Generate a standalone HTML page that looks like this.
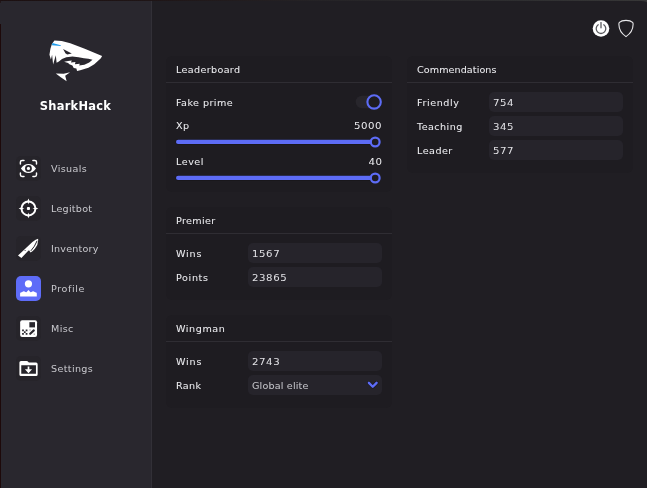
<!DOCTYPE html>
<html lang="en">
<head>
<meta charset="utf-8">
<title>SharkHack</title>
<style>
*{box-sizing:border-box;margin:0;padding:0}
html,body{width:647px;height:488px;overflow:hidden;background:#201e23}
body{position:relative;will-change:transform;font-family:"DejaVu Sans","Liberation Sans",sans-serif;font-size:9.1px;color:#ededf1;letter-spacing:.33px;-webkit-text-stroke:.05px currentColor}
.abs{position:absolute}
#edge-t{left:0;top:0;width:647px;height:1px;background:linear-gradient(90deg,#1c1011 0,#1f1516 150px,#252326 320px,#2e2e30 520px,#373737 100%)}
#edge-l{left:0;top:24px;width:1px;height:464px;background:#1d090a}
#side{left:0;top:0;width:151px;height:488px;background:#29272e}
#side-b{left:151px;top:0;width:1px;height:488px;background:#323037}
#brand{left:0;top:97.600px;width:151px;text-align:center;font-weight:bold;font-size:11.4px;color:#fff;letter-spacing:.25px;line-height:16px;transform:scaleX(1.005);-webkit-text-stroke:0}
.nav{left:16px;width:25px;height:25px;border-radius:5px;background:#26242a}
.nav.on{background:#5e6cf8}
.nav svg{position:absolute;left:0;top:0;width:25px;height:25px}
.nl{left:51px;height:25px;line-height:27px;color:#c9c9ce;-webkit-text-stroke:0;white-space:nowrap;transform:scaleX(1.055);transform-origin:0 50%}
.panel{background:#1e1c21;border-radius:6px}
.panel .hd{position:absolute;left:0;top:0;right:0;height:27px;border-bottom:1px solid #2f2d33}
.t{position:absolute;white-space:nowrap;height:20px;line-height:20px;transform:scaleX(1.055);transform-origin:0 50%}
.t.r{transform-origin:100% 50%;transform:scaleX(1.12);letter-spacing:.45px;-webkit-text-stroke:0}
.in span{display:inline-block;transform:scaleX(1.12);transform-origin:0 50%;-webkit-text-stroke:0}
.in span.tx{transform:scaleX(1.055);-webkit-text-stroke:.05px currentColor}
.in{position:absolute;height:20px;background:#26242b;border-radius:5px;line-height:22px;overflow:hidden;letter-spacing:.52px;padding-left:4.2px;white-space:nowrap;color:#e2e2e6}
</style>
</head>
<body>
<div id="side" class="abs"></div>
<div id="side-b" class="abs"></div>
<div id="edge-t" class="abs"></div>
<div id="edge-l" class="abs"></div>
<div class="abs" style="left:0;top:0;width:1px;height:3px;background:linear-gradient(#1d0f10,#241a1d)"></div>
<svg class="abs" style="left:641px;top:0" width="6" height="4" viewBox="0 0 6 4"><path d="M0 0H6V2.6Q5.4 1.1 0 1Z" fill="#383838"/></svg>

<!-- logo -->
<svg class="abs" style="left:40px;top:32px" width="72" height="58" viewBox="40 32 72 58">
  <path fill="#fff" d="M54.400 40.400L61.700 40.900L70.300 43.200L84.750 48.850L102.100 55.900C101.200 57.800 100.400 58.600 99.500 59.500L94.300 64.300Q91.500 66.300 88.400 67.650L81.100 69.900L77.050 71L76.400 68.600L73.700 68L72.400 65.500L69.400 64.300L68.100 63.050L64.100 61.800L68.100 60.900L71.800 60.500L70.900 62.400L75.500 61.900L74.900 64.200L79.800 63.700L79.200 65.500L84.400 64.700L89.200 62.500L92.500 59.750L88.400 58.800L84 58.200L78.600 57.200L72.400 56.600L66.300 57.200L62 59.050L58.900 61.500L56.600 62.800L55.800 55.200L53.100 64.500L52.100 54.700L50.900 59.400L49.450 54.700L50.400 48.800L51.900 43.900Z"/>
  <path fill="#29272e" d="M63.100 48.900L71.800 53.500L67.200 54.600L65.400 53.200Z"/>
  <path fill="#1e9cec" d="M52.400 43L60.750 45.300L60.750 45.950L51.900 45.350Z"/>
  <path fill="#fff" d="M55.800 73.400L63.700 73.850L70.100 72.200L65.200 75.800L66.650 81.200L60.750 77.300Z"/>
</svg>
<div id="brand" class="abs">SharkHack</div>

<!-- nav -->
<div class="abs nav" style="top:156px"><svg viewBox="0 0 25 25"><g fill="none" stroke="#fff" stroke-width="1.45" stroke-linecap="round" stroke-linejoin="round"><path d="M4.400 8V6.100a1.700 1.700 0 0 1 1.700-1.700H8M16.900 4.400h1.900a1.700 1.700 0 0 1 1.700 1.700V8M20.500 16.900v1.900a1.700 1.700 0 0 1-1.700 1.700h-1.900M8 20.500H6.100a1.700 1.700 0 0 1-1.700-1.700v-1.900"/></g><path fill="#fff" fill-rule="evenodd" d="M4.900 12.450C7 9.300 9.600 7.950 12.450 7.950S17.900 9.300 20 12.450C17.900 15.600 15.300 16.950 12.450 16.950S7 15.600 4.900 12.450zM12.450 9.050a3.400 3.400 0 1 0 0 6.800a3.400 3.400 0 0 0 0-6.800z"/><circle cx="12.450" cy="12.450" r="1.600" fill="#fff"/></svg></div>
<div class="abs nl" style="top:156px">Visuals</div>

<div class="abs nav" style="top:196px"><svg viewBox="0 0 25 25"><circle cx="12.45" cy="12.45" r="6.95" fill="none" stroke="#fff" stroke-width="1.95"/><rect x="10.900" y="10.900" width="3.100" height="3.100" rx="1" fill="#fff"/><path fill="#fff" d="M12.450 2.600l1 2.500-1 3.300-1-3.300zM12.450 22.300l1-2.500-1-3.300-1 3.300zM2.600 12.450l2.500-1 3.300 1-3.300 1zM22.300 12.450l-2.500-1-3.300 1 3.300 1z"/></svg></div>
<div class="abs nl" style="top:196px;letter-spacing:.24px">Legitbot</div>

<div class="abs nav" style="top:236px"><svg viewBox="0 0 25 25"><path fill="#fff" d="M8.400 13.400L16.400 6Q20 3.200 22.100 2.800Q22.700 8 18.900 12.800Q16.800 15.400 14.600 16.500L13 14.300L11.800 15.200L5.400 22L2 19.500Z"/><path d="M14.9 14.8Q18.8 10.6 21.1 4.8" fill="none" stroke="#26242a" stroke-width="1"/><circle cx="9.100" cy="14.500" r=".55" fill="#252329"/></svg></div>
<div class="abs nl" style="top:236px;letter-spacing:.18px">Inventory</div>

<div class="abs nav on" style="top:276px"><svg viewBox="0 0 25 25"><circle cx="12.450" cy="7.800" r="3.600" fill="#fff"/><path fill="#fff" d="M4.1 20.6V17.6Q4.1 16.7 4.9 16.5L6.2 16.1Q7.8 14.2 9.4 16.1L10.4 16.3L12.45 13.9L14.5 16.3L15.5 16.1Q17.1 14.2 18.7 16.1L20 16.5Q20.8 16.7 20.8 17.6V20.6Z"/></svg></div>
<div class="abs nl" style="top:276px;letter-spacing:.55px">Profile</div>

<div class="abs nav" style="top:316px"><svg viewBox="0 0 25 25"><rect x="4.150" y="4.150" width="16.900" height="16.900" rx="2" fill="#fff"/><rect x="13.35" y="6.15" width="5.65" height="5.25" fill="#2a282f"/><g fill="#2a282f"><rect x="6.100" y="13.500" width="1.750" height="1.750"/><rect x="9.700" y="13.500" width="1.750" height="1.750"/><rect x="7.900" y="15.250" width="1.750" height="1.750"/><rect x="6.100" y="17" width="1.750" height="1.750"/><rect x="9.700" y="17" width="1.750" height="1.750"/><rect x="13.500" y="13.400" width="1.100" height="1.100" opacity=".6"/><rect x="17.700" y="17.600" width="1.100" height="1.100" opacity=".6"/></g><path d="M14.200 17.800L17.800 14.400" stroke="#2a282f" stroke-width="2.15" stroke-linecap="round"/></svg></div>
<div class="abs nl" style="top:316px">Misc</div>

<div class="abs nav" style="top:356px"><svg viewBox="0 0 25 25"><path fill="#fff" fill-rule="evenodd" d="M3.400 6.500a1.600 1.600 0 0 1 1.600-1.600h5.600q.6 0 1 .4l1.300 1.300h7.150a1.600 1.600 0 0 1 1.600 1.600v10.200a1.600 1.600 0 0 1-1.600 1.600H5a1.600 1.600 0 0 1-1.600-1.600zM5.250 9.200v8.600h14.700V9.200z"/><path fill="#fff" d="M11.650 10.600h1.700v2.750h2.750l-3.600 3.800-3.600-3.800h2.750z"/></svg></div>
<div class="abs nl" style="top:356px">Settings</div>

<!-- top right icons -->
<svg class="abs" style="left:590px;top:18px" width="22" height="22" viewBox="0 0 22 22"><circle cx="11" cy="10.500" r="8.300" fill="#fff"/><path d="M8.200 6.800a4.800 4.800 0 1 0 5.600 0" fill="none" stroke="#5a5a5e" stroke-width="1.300" stroke-linecap="round"/><path d="M11 4.600v5.200" stroke="#5a5a5e" stroke-width="1.300" stroke-linecap="round"/></svg>
<svg class="abs" style="left:616px;top:18px" width="20" height="22" viewBox="0 0 20 22"><path d="M10 2.4C7 2.4 4.6 3.2 3.4 4.3C2.8 4.9 2.8 5.6 2.9 6.6C3 12 6.2 16.2 10 18.6C13.8 16.2 17 12 17.1 6.6C17.2 5.6 17.2 4.9 16.6 4.3C15.4 3.2 13 2.4 10 2.4Z" fill="none" stroke="#e8e8ea" stroke-width="1.100" stroke-linejoin="round"/></svg>

<!-- Leaderboard -->
<div class="abs panel" style="left:166px;top:56px;width:226px;height:136px">
  <div class="hd"></div>
  <div class="t" style="left:9.600px;top:4.300px">Leaderboard</div>
  <div class="t" style="left:9.600px;top:37.300px;letter-spacing:.42px">Fake prime</div>
  <svg class="abs" style="left:0;top:0" width="226" height="136" viewBox="0 0 226 136">
    <rect x="189.7" y="39.75" width="26" height="12.5" rx="6.25" fill="#28262c"/>
    <circle cx="208.1" cy="45.9" r="6.7" fill="#1e1c21" stroke="#5d6cf6" stroke-width="2.1"/>
    <rect x="9.6" y="83.4" width="200" height="5" rx="2.5" fill="#151317"/>
    <rect x="10" y="83.85" width="199.5" height="4.2" rx="2.1" fill="#5d6cf6"/>
    <circle cx="209.2" cy="86" r="4.4" fill="#1e1c21" stroke="#5d6cf6" stroke-width="2.2"/>
    <rect x="9.6" y="119.4" width="200" height="5" rx="2.5" fill="#151317"/>
    <rect x="10" y="119.85" width="199.5" height="4.2" rx="2.1" fill="#5d6cf6"/>
    <circle cx="209.2" cy="122" r="4.4" fill="#1e1c21" stroke="#5d6cf6" stroke-width="2.2"/>
  </svg>
  <div class="t" style="left:9.600px;top:59.600px">Xp</div>
  <div class="t r" style="right:10px;top:59.600px">5000</div>
  <div class="t" style="left:9.600px;top:96.400px;letter-spacing:.5px">Level</div>
  <div class="t r" style="right:10px;top:96.400px">40</div>
</div>

<!-- Premier -->
<div class="abs panel" style="left:166px;top:207px;width:226px;height:93px">
  <div class="hd"></div>
  <div class="t" style="left:9.600px;top:4.300px">Premier</div>
  <div class="t" style="left:9.600px;top:37px;letter-spacing:.75px">Wins</div>
  <div class="in" style="left:82px;top:36px;width:134px"><span>1567</span></div>
  <div class="t" style="left:9.600px;top:61px;letter-spacing:.6px">Points</div>
  <div class="in" style="left:82px;top:60px;width:134px"><span>23865</span></div>
</div>

<!-- Wingman -->
<div class="abs panel" style="left:166px;top:315px;width:226px;height:93px">
  <div class="hd"></div>
  <div class="t" style="left:9.600px;top:4.300px;letter-spacing:.55px">Wingman</div>
  <div class="t" style="left:9.600px;top:37px;letter-spacing:.75px">Wins</div>
  <div class="in" style="left:82px;top:36px;width:134px"><span>2743</span></div>
  <div class="t" style="left:9.600px;top:61px">Rank</div>
  <div class="in" style="left:82px;top:60px;width:134px;color:#c4c4c9;letter-spacing:.16px"><span class="tx">Global elite</span></div>
  <svg class="abs" style="left:200px;top:64px" width="14" height="12" viewBox="0 0 14 12"><path d="M2.9 3.85l3.85 3.9 3.85-3.9" fill="none" stroke="#1a181d" stroke-width="3.5" stroke-linecap="round" stroke-linejoin="round"/><path d="M2.9 3.85l3.85 3.9 3.85-3.9" fill="none" stroke="#5d6cf6" stroke-width="2.4" stroke-linecap="round" stroke-linejoin="round"/></svg>
</div>

<!-- Commendations -->
<div class="abs panel" style="left:407px;top:56px;width:226px;height:117px">
  <div class="hd"></div>
  <div class="t" style="left:9.600px;top:4.300px;letter-spacing:.07px">Commendations</div>
  <div class="t" style="left:9.600px;top:37px;letter-spacing:.55px">Friendly</div>
  <div class="in" style="left:82px;top:36px;width:134px"><span>754</span></div>
  <div class="t" style="left:9.600px;top:61px;letter-spacing:.42px">Teaching</div>
  <div class="in" style="left:82px;top:60px;width:134px"><span>345</span></div>
  <div class="t" style="left:9.600px;top:85px;letter-spacing:.45px">Leader</div>
  <div class="in" style="left:82px;top:84px;width:134px"><span>577</span></div>
</div>
</body>
</html>
